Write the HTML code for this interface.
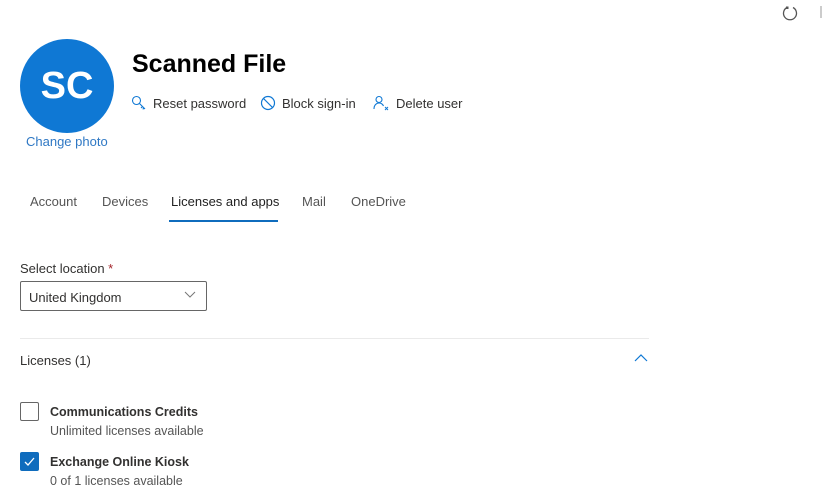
<!DOCTYPE html>
<html><head><meta charset="utf-8"><style>
body{margin:0;width:823px;height:490px;background:#fff;font-family:"Liberation Sans",sans-serif;color:#323130;position:relative;overflow:hidden}
.a{position:absolute;white-space:nowrap}
</style></head><body>
<svg class="a" style="left:781px;top:4px" width="18" height="18" viewBox="0 0 18 18"><path d="M6 3.5A6.5 6.5 0 1 0 12 3.5" fill="none" stroke="#555" stroke-width="1.3"/><rect x="5" y="2.5" width="2.5" height="2.5" fill="#555"/></svg>
<div class="a" style="left:820px;top:6px;width:2px;height:12px;background:#ccc"></div>
<div class="a" style="left:20px;top:39px;width:94px;height:94px;border-radius:50%;background:#0f78d4;color:#fff;font-size:38px;font-weight:bold;text-align:center;line-height:94px">SC</div>
<div class="a" style="left:26px;top:134px;font-size:13px;color:#2f78c4">Change photo</div>
<div class="a" style="left:132px;top:50px;font-size:25px;font-weight:bold;color:#000">Scanned File</div>
<svg class="a" style="left:131px;top:95px" width="16" height="16" viewBox="0 0 16 16"><circle cx="5.5" cy="5.5" r="4" fill="none" stroke="#0f78d4" stroke-width="1.1"/><path d="M8.5 8.5L14 14M11.5 11.5l-1.5 1.5M13 13l-1.3 1.3" fill="none" stroke="#0f78d4" stroke-width="1.1"/></svg>
<div class="a" style="left:153px;top:96px;font-size:13px">Reset password</div>
<svg class="a" style="left:260px;top:95px" width="16" height="16" viewBox="0 0 16 16"><circle cx="8" cy="8" r="6.5" fill="none" stroke="#0f78d4" stroke-width="1.2"/><path d="M3.5 3.5L12.5 12.5" stroke="#0f78d4" stroke-width="1.2"/></svg>
<div class="a" style="left:282px;top:96px;font-size:13px">Block sign-in</div>
<svg class="a" style="left:373px;top:95px" width="16" height="16" viewBox="0 0 16 16"><circle cx="6" cy="4.5" r="3" fill="none" stroke="#0f78d4" stroke-width="1.1"/><path d="M1 14c0-4 2.5-6 5-6s3.5 1 4.5 3" fill="none" stroke="#0f78d4" stroke-width="1.1"/><path d="M12 12l3 3M15 12l-3 3" stroke="#0f78d4" stroke-width="1"/></svg>
<div class="a" style="left:396px;top:96px;font-size:13px">Delete user</div>
<div class="a" style="left:30px;top:194px;font-size:13px;color:#555">Account</div>
<div class="a" style="left:102px;top:194px;font-size:13px;color:#555">Devices</div>
<div class="a" style="left:171px;top:194px;font-size:13px;color:#222">Licenses and apps</div>
<div class="a" style="left:169px;top:220px;width:109px;height:2px;background:#0f6cbd"></div>
<div class="a" style="left:302px;top:194px;font-size:13px;color:#555">Mail</div>
<div class="a" style="left:351px;top:194px;font-size:13px;color:#555">OneDrive</div>
<div class="a" style="left:20px;top:261px;font-size:13px">Select location <span style="color:#a4262c">*</span></div>
<div class="a" style="left:20px;top:281px;width:185px;height:28px;border:1px solid #666;border-radius:2px"></div>
<div class="a" style="left:29px;top:290px;font-size:13px">United Kingdom</div>
<svg class="a" style="left:184px;top:291px" width="12" height="8" viewBox="0 0 12 8"><path d="M1 1l5 5 5-5" fill="none" stroke="#777" stroke-width="1"/></svg>
<div class="a" style="left:20px;top:338px;width:629px;height:1px;background:#eaeaea"></div>
<div class="a" style="left:20px;top:353px;font-size:13px">Licenses (1)</div>
<svg class="a" style="left:634px;top:353px" width="14" height="9" viewBox="0 0 14 9"><path d="M1 8l6-6 6 6" fill="none" stroke="#0f78d4" stroke-width="1.2"/></svg>
<div class="a" style="left:20px;top:402px;width:17px;height:17px;border:1px solid #666;border-radius:2px"></div>
<div class="a" style="left:50px;top:405px;font-size:12.5px;font-weight:bold">Communications Credits</div>
<div class="a" style="left:50px;top:424px;font-size:12.5px;color:#555">Unlimited licenses available</div>
<div class="a" style="left:20px;top:452px;width:19px;height:19px;background:#0f6cbd;border-radius:2px"></div>
<svg class="a" style="left:23px;top:455px" width="13" height="13" viewBox="0 0 13 13"><path d="M2 7l3 3 6-7" fill="none" stroke="#fff" stroke-width="1.3"/></svg>
<div class="a" style="left:50px;top:455px;font-size:12.5px;font-weight:bold">Exchange Online Kiosk</div>
<div class="a" style="left:50px;top:474px;font-size:12.5px;color:#555">0 of 1 licenses available</div>
</body></html>
